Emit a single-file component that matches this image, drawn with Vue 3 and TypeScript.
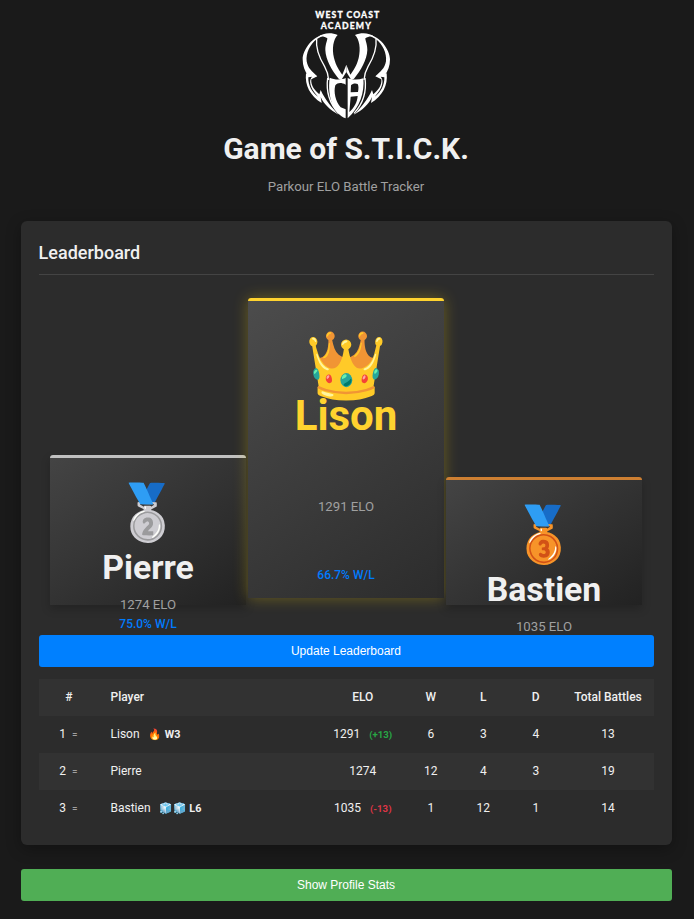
<script setup lang="ts">
interface Place { place: string; medal: string; name: string; elo: number; ratio?: string }
interface Row {
  rank: number
  name: string
  icons?: string
  streak?: string
  elo: number
  delta?: number
  wins: number
  losses: number
  draws: number
  total: number
}

const podium: Place[] = [
  { place: 'second', medal: '🥈', name: 'Pierre', elo: 1274, ratio: '75.0%' },
  { place: 'first', medal: '👑', name: 'Lison', elo: 1291, ratio: '66.7%' },
  { place: 'third', medal: '🥉', name: 'Bastien', elo: 1035 },
]

const rows: Row[] = [
  { rank: 1, name: 'Lison', icons: '🔥', streak: 'W3', elo: 1291, delta: 13, wins: 6, losses: 3, draws: 4, total: 13 },
  { rank: 2, name: 'Pierre', elo: 1274, wins: 12, losses: 4, draws: 3, total: 19 },
  { rank: 3, name: 'Bastien', icons: '🧊🧊', streak: 'L6', elo: 1035, delta: -13, wins: 1, losses: 12, draws: 1, total: 14 },
]

// The right wing of the emblem is the left one mirrored.
const wings: string[] = ['translate(0 0)', 'matrix(-1 0 0 1 338 0)']

const signed = (n: number): string => (n > 0 ? `(+${n})` : `(${n})`)
</script>

<template>
  <div class="page">
    <header class="header">
      <svg class="logo" viewBox="0 0 336 375" role="img" aria-label="West Coast Academy">
        <g class="logo-text">
          <text x="76" y="55" textLength="192">WEST COAST</text>
          <text x="92" y="87" textLength="151">ACADEMY</text>
        </g>
        <g v-for="w in wings" :key="w" class="mark" :transform="w">
          <path d="M104 104 C70 106 38 148 38 178 C38 198 44 214 55 228 L82 229 C66 214 54 206 50 184 C47 160 60 132 81 117 Z" />
          <path class="line" d="M80 116 C76 150 92 180 104 200 C112 214 115 224 116 240" />
          <path d="M84 111 C100 97 126 97 143 105 C130 118 125 146 132 174 C138 198 148 212 157 224 L169 194 L169 216 L154 240 L146 236 C126 212 107 180 106 150 C106 132 112 122 112 115 C104 109 94 108 84 111 Z" />
          <path d="M48 220 C44 256 60 288 95 309 L92 291 C102 313 120 330 146 344 C124 322 106 300 92 270 L88 283 C72 270 62 254 64 238 L82 229 Z M55 232 L66 230 C56 240 58 262 84 290 C66 278 54 256 55 232 Z" fill-rule="evenodd" />
          <path class="line" d="M113 234 C108 272 116 308 146 340" />
        </g>
        <g class="mark">
          <path d="M119 233 C134 240 154 240 167 234 L167 254 C153 247 143 248 136 256 C130 277 137 305 152 322 L167 328 L167 355 C133 342 111 296 119 233 Z" />
          <path d="M173 234 C187 240 205 240 220 235 C224 277 210 322 173 355 Z M183 256 L182 277 L204 276 C206 265 206 258 203 252 C197 249 188 250 183 256 Z M182 290 L178 336 C192 324 202 306 203 288 Z" fill-rule="evenodd" />
        </g>
      </svg>
      <h1>Game of S.T.I.C.K.</h1>
      <p>Parkour ELO Battle Tracker</p>
    </header>

    <section class="card">
      <h2>Leaderboard</h2>
      <div class="podium">
        <div v-for="p in podium" :key="p.place" class="step" :class="p.place">
          <div class="medal">{{ p.medal }}</div>
          <div class="name">{{ p.name }}</div>
          <div class="elo">{{ p.elo }} ELO</div>
          <div v-if="p.ratio" class="ratio">{{ p.ratio }} W/L</div>
        </div>
      </div>
      <button class="update" type="button">Update Leaderboard</button>
      <table>
        <colgroup>
          <col class="c-rank"><col><col class="c-elo"><col class="c-n"><col class="c-n"><col class="c-n"><col class="c-total">
        </colgroup>
        <thead>
          <tr><th>#</th><th class="player">Player</th><th>ELO</th><th>W</th><th>L</th><th>D</th><th>Total Battles</th></tr>
        </thead>
        <tbody>
          <tr v-for="r in rows" :key="r.rank">
            <td class="rank">{{ r.rank }}<span class="trend">=</span></td>
            <td class="player">{{ r.name }}<span v-if="r.streak" class="streak">{{ r.icons }} {{ r.streak }}</span></td>
            <td>{{ r.elo }}<span v-if="r.delta" class="delta" :class="r.delta > 0 ? 'up' : 'down'">{{ signed(r.delta) }}</span></td>
            <td>{{ r.wins }}</td>
            <td>{{ r.losses }}</td>
            <td>{{ r.draws }}</td>
            <td>{{ r.total }}</td>
          </tr>
        </tbody>
      </table>
    </section>

    <button class="profile" type="button">Show Profile Stats</button>
  </div>
</template>

<style>
body {
  background: #1a1a1a;
}
</style>

<style scoped>
.page {
  box-sizing: border-box;
  height: 919px;
  padding: 0 22px 0 21px;
  overflow: hidden;
  background: #1a1a1a;
  color: #f0f0f0;
  font-family: Roboto, "Noto Color Emoji", sans-serif;
}
.header {
  height: 221px;
  padding-right: 1px;
  text-align: center;
}
.logo {
  display: block;
  width: 112px;
  height: 125px;
  margin: 0 auto;
}
.logo-text {
  fill: #fff;
  stroke: #fff;
  stroke-width: 0.8px;
  font: 900 26px Lato, sans-serif;
}
.mark {
  fill: #fff;
}
.line {
  fill: none;
  stroke: #fff;
  stroke-width: 4px;
}
h1 {
  margin: 5px 0 0;
  font-size: 30px;
  line-height: 38px;
  font-weight: 700;
}
.header p {
  margin: 9px 0 0;
  font-size: 13.2px;
  line-height: 20px;
  color: #a0a0a0;
}
.card {
  box-sizing: border-box;
  height: 624px;
  padding: 18px;
  border-radius: 6px;
  background: #2c2c2c;
  box-shadow: 0 4px 15px rgba(0, 0, 0, 0.3);
}
h2 {
  box-sizing: border-box;
  height: 36px;
  margin: 0;
  border-bottom: 1px solid #444;
  font-size: 18px;
  line-height: 27px;
  font-weight: 500;
  text-indent: -0.4px;
}
.podium {
  display: flex;
  justify-content: center;
  align-items: flex-end;
  gap: 2px;
  height: 330px;
  margin-bottom: 30px;
  padding-right: 1px;
}
.step {
  box-sizing: border-box;
  display: flex;
  flex-direction: column;
  align-items: center;
  width: 196px;
  border-top: 3px solid #c0c0c0;
  border-radius: 3px 3px 0 0;
  background: linear-gradient(145deg, #444, #222);
  box-shadow: 0 4px 10px rgba(0, 0, 0, 0.2);
}
.second {
  height: 150px;
}
.third {
  z-index: 2;
  height: 128px;
  border-color: #cd7f32;
}
.first {
  z-index: 1;
  height: 300px;
  margin-bottom: 7px;
  border-color: #ffd32f;
  background: linear-gradient(145deg, #4c4c4c, #2c2c2c);
  box-shadow: 0 0 15px rgba(255, 215, 0, 0.3);
}
.medal {
  flex: none;
  height: 60px;
  margin-top: 25px;
  font-size: 54px;
  line-height: 60px;
}
.name {
  flex: none;
  margin-top: 5px;
  font-size: 33.8px;
  line-height: 40px;
  font-weight: 700;
}
.elo {
  flex: none;
  margin-top: 8px;
  font-size: 13.2px;
  line-height: 18px;
  color: #a0a0a0;
}
.ratio {
  flex: none;
  margin-top: 1px;
  font-size: 12px;
  line-height: 18px;
  font-weight: 500;
  color: #007bff;
}
.first .medal {
  height: 70px;
  margin-top: 30px;
  font-size: 66px;
  line-height: 70px;
}
.first .name {
  margin-top: -10px;
  font-size: 42px;
  line-height: 50px;
  color: #ffd32f;
}
.first .elo {
  margin-top: 57px;
}
.first .ratio {
  margin-top: 50px;
}
button {
  position: relative;
  z-index: 3;
  display: block;
  width: 100%;
  height: 32px;
  padding: 0 1px 0 0;
  border: 0;
  border-radius: 3px;
  color: #fff;
  font: 12px "Liberation Sans", sans-serif;
}
.update {
  background: #0080ff;
}
.profile {
  margin-top: 24px;
  background: #50ae55;
}
table {
  width: 615px;
  margin-top: 12px;
  border-collapse: collapse;
  table-layout: fixed;
  font-size: 12px;
}
.c-rank { width: 59.5px; }
.c-elo { width: 83.5px; }
.c-n { width: 52.5px; }
.c-total { width: 92px; }
th,
td {
  box-sizing: border-box;
  height: 37px;
  padding: 0 0 2px;
  line-height: 18px;
  text-align: center;
  white-space: nowrap;
}
td span {
  line-height: 1;
}
th {
  font-weight: 500;
}
.rank {
  padding-right: 1px;
}
.player {
  padding-left: 12px;
  text-align: left;
}
thead tr,
tbody tr:nth-child(even) {
  background: #323232;
}
.trend {
  margin-left: 6px;
  font-size: 10px;
  color: #a0a0a0;
}
.streak {
  margin-left: 9.2px;
  font-size: 10.8px;
  font-weight: 700;
}
.delta {
  margin-left: 9px;
  font-size: 9.6px;
  font-weight: 700;
}
.up { color: #28a745; }
.down { color: #dc3545; }
</style>
